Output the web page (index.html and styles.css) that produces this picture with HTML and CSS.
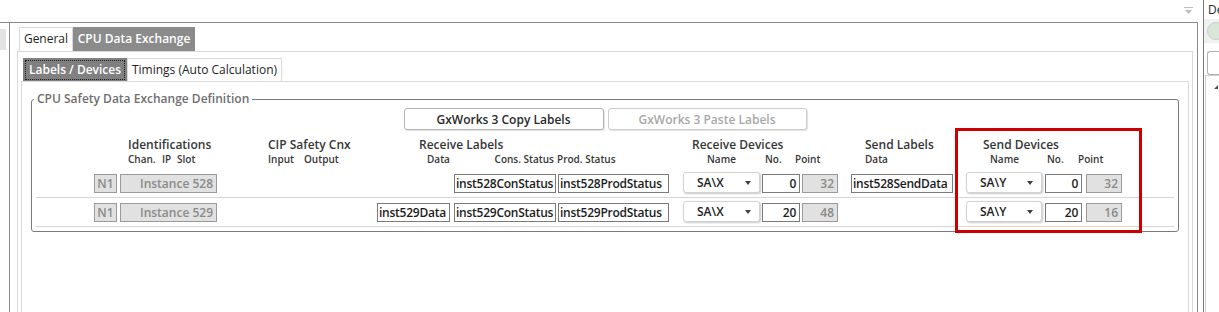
FILE: index.html
```html
<!DOCTYPE html>
<html lang="en">

<head>
    <meta charset="UTF-8">
    <meta name="viewport" content="width=device-width, initial-scale=1.0">
    <title>CPU Data Exchange</title>
    <link rel="stylesheet" href="styles.css">
</head>

<body>
    <div class="main">
        <div class="titlebar">
            <svg class="pin" width="9" height="8" viewBox="0 0 9 8">
                <rect x="0" y="0" width="9" height="1" fill="#bdbdbd" />
                <path d="M1 3 H8 L4.5 7 Z" fill="#bdbdbd" />
            </svg>
        </div>
        <div class="workspace">
            <div class="left-stub">
                <div class="stub-item"></div>
            </div>
            <div class="doc">
                <div class="tabs">
                    <div class="tab tab-general">General</div>
                    <div class="tab tab-cpu active">CPU Data Exchange</div>
                </div>
                <div class="tab-page">
                    <div class="tabs inner">
                        <div class="tab tab-labels active"><span class="focus">Labels / Devices</span></div>
                        <div class="tab tab-timings">Timings (Auto Calculation)</div>
                    </div>
                    <div class="tab-page inner-page">
                        <fieldset class="group">
                            <legend>CPU Safety Data Exchange Definition</legend>
                            <div class="actions">
                                <button class="btn">GxWorks 3 Copy Labels</button>
                                <button class="btn" disabled>GxWorks 3 Paste Labels</button>
                            </div>

                            <div class="head">
                                <div class="hcol h-ident">
                                    <div class="htitle">Identifications</div>
                                    <div class="hsub"><span class="w-chan">Chan.</span><span class="w-ip">IP</span><span>Slot</span></div>
                                </div>
                                <div class="hcol h-cip">
                                    <div class="htitle">CIP Safety Cnx</div>
                                    <div class="hsub"><span class="w-input">Input</span><span>Output</span></div>
                                </div>
                                <div class="hcol h-rlab">
                                    <div class="htitle">Receive Labels</div>
                                    <div class="hsub"><span class="s-data">Data</span><span>Cons. Status</span><span class="s-prod">Prod. Status</span></div>
                                </div>
                                <div class="hcol h-rdev">
                                    <div class="htitle">Receive Devices</div>
                                    <div class="hsub"><span class="w-rname">Name</span><span class="w-rno">No.</span><span>Point</span></div>
                                </div>
                                <div class="hcol h-slab">
                                    <div class="htitle">Send Labels</div>
                                    <div class="hsub"><span>Data</span></div>
                                </div>
                                <div class="hcol h-sdev">
                                    <div class="htitle">Send Devices</div>
                                    <div class="hsub"><span class="w-sname">Name</span><span class="w-sno">No.</span><span>Point</span></div>
                                </div>
                            </div>

                            <div class="row first">
                                <div class="box ro center at-chan">N1</div>
                                <div class="box ro at-inst">Instance 528</div>
                                <div class="box at-cons">inst528ConStatus</div>
                                <div class="box at-prod">inst528ProdStatus</div>
                                <div class="combo at-rname"><span>SA\X</span><i class="caret"></i></div>
                                <div class="box num at-rno">0</div>
                                <div class="box ro at-rpt">32</div>
                                <div class="box at-slab">inst528SendData</div>
                                <div class="combo at-sname"><span>SA\Y</span><i class="caret"></i></div>
                                <div class="box num at-sno">0</div>
                                <div class="box ro at-spt">32</div>
                            </div>
                            <div class="row">
                                <div class="box ro center at-chan">N1</div>
                                <div class="box ro at-inst">Instance 529</div>
                                <div class="box at-data">inst529Data</div>
                                <div class="box at-cons">inst529ConStatus</div>
                                <div class="box at-prod">inst529ProdStatus</div>
                                <div class="combo at-rname"><span>SA\X</span><i class="caret"></i></div>
                                <div class="box num at-rno">20</div>
                                <div class="box ro at-rpt">48</div>
                                <div class="combo at-sname"><span>SA\Y</span><i class="caret"></i></div>
                                <div class="box num at-sno">20</div>
                                <div class="box ro at-spt">16</div>
                            </div>
                        </fieldset>
                    </div>
                </div>
            </div>
        </div>
    </div>

    <div class="side">
        <div class="side-title">De</div>
        <div class="side-toolbar"><span class="side-icon"></span></div>
        <div class="side-search"></div>
        <div class="side-tree"><i class="tree-arrow"></i></div>
    </div>

    <div class="highlight"></div>
</body>

</html>
```

FILE: styles.css
```css
html,
body {
    height: 100%;
}

body {
    margin: 0;
    display: flex;
    overflow: hidden;
    background-color: #ffffff;
    color: #1e1e1e;
    font-family: "Open Sans", "Noto Sans", sans-serif;
    font-size: 12px;
}

.main {
    width: 1198px;
    flex: none;
    display: flex;
    flex-direction: column;
}

.titlebar {
    flex: none;
    height: 22px;
    border-bottom: 1px solid #8a8a8a;
    display: flex;
    justify-content: flex-end;
    align-items: flex-start;
}

.pin {
    margin: 7px 5px 0 0;
}

.workspace {
    flex: 1;
    min-height: 0;
    display: flex;
}

.left-stub {
    width: 9px;
}

.stub-item {
    width: 6px;
    height: 21px;
    margin-top: 6px;
    background-color: #e3e3e3;
}

.doc {
    flex: 1;
    overflow: hidden;
    border-left: 1px solid #8a8a8a;
    border-right: 1px solid #8a8a8a;
    padding: 4px 4px 0 7px;
}

/* Tabs */

.tabs {
    display: flex;
    padding-left: 2px;
}

.tab {
    box-sizing: border-box;
    height: 24px;
    line-height: 22px;
    border: 1px solid #d9d9d9;
    border-bottom: none;
    text-align: center;
    white-space: nowrap;
}

.tab.active {
    background-color: #8b8b8b;
    border-color: #8b8b8b;
    color: #ffffff;
    font-weight: 600;
}

.tab-general {
    width: 54px;
}

.tab-cpu {
    width: 122px;
}

.tab-page {
    height: 300px;
    border: 1px solid #d9d9d9;
    border-bottom: none;
    padding: 0 3px;
}

.tabs.inner {
    margin-top: 6px;
}

.tabs.inner .tab {
    height: 23px;
}

.tab-labels {
    width: 104px;
    padding: 1px;
}

.tab-labels.active {
    background-color: #808080;
    border-color: #808080;
}

.focus {
    display: block;
    height: 100%;
    box-sizing: border-box;
    border: 1px dotted #1a1a1a;
    line-height: 18px;
}

.tab-timings {
    width: 155px;
}

.inner-page {
    padding: 0 9px;
}

/* Group box */

.group {
    margin: 9px 0 0 0;
    padding: 0 0 4px 0;
    border: 1px solid #7a7a7a;
    border-radius: 3px;
    min-inline-size: 0;
}

.group legend {
    margin-left: 2px;
    padding: 0 3px;
    line-height: 16px;
    font-weight: 600;
    color: #6f6f6f;
}

.actions {
    display: flex;
    justify-content: center;
    gap: 4px;
    margin-top: 1px;
}

.btn {
    width: 200px;
    height: 22px;
    padding: 0;
    font-family: inherit;
    font-size: 12px;
    font-weight: 600;
    color: #2a2a2a;
    background-color: #ffffff;
    border: 1px solid #b4b4b4;
    border-radius: 3px;
    box-shadow: 1px 1px 1px rgba(0, 0, 0, 0.12);
}

.btn:disabled {
    width: 199px;
    color: #a8a8a8;
    border-color: #cccccc;
}

/* Column headers */

.head {
    display: flex;
    margin: 7px 4px 0;
    padding-left: 92px;
    color: #363636;
    font-weight: 600;
    white-space: nowrap;
}

.htitle {
    line-height: 16px;
}

.hsub {
    display: flex;
    font-size: 10px;
    line-height: 12px;
}

.h-ident {
    width: 140px;
}

.h-cip {
    width: 151px;
}

.h-rlab {
    width: 273px;
}

.h-rdev {
    width: 173px;
}

.h-slab {
    width: 118px;
}

.w-chan {
    width: 34px;
}

.w-ip {
    width: 15px;
}

.w-input {
    width: 36px;
}

.s-data {
    flex: 1;
    margin-left: 8px;
}

.s-prod {
    width: 135px;
    margin-left: 3px;
}

.w-rname {
    width: 58px;
    margin-left: 15px;
}

.w-rno {
    width: 30px;
}

.w-sname {
    width: 57px;
    margin-left: 7px;
}

.w-sno {
    width: 31px;
}

/* Data rows */

.row {
    display: grid;
    grid-template-columns: [chan] 23px 3px [inst] 97px 160px [data] 73px 4px [cons] 102px 2px [prod] 111px 14px [rname] 77px 2px [rno] 38px 2px [rpt] 36px 13px [slab] 102px 13px [sname] 76px 3px [sno] 37px 4px [spt] 36px;
    grid-auto-rows: 21px;
    align-items: end;
    margin: 0 4px;
    padding: 3px 0 4px 58px;
    border-bottom: 1px solid #d6d6d6;
}

.row.first {
    padding-top: 7px;
}

.box {
    box-sizing: border-box;
    height: 19px;
    line-height: 17px;
    padding: 0 1px;
    border: 1px solid #7a7a7a;
    background-color: #ffffff;
    color: #1c1c1c;
    font-weight: 600;
    letter-spacing: -0.25px;
    white-space: nowrap;
    overflow: hidden;
}

.box.ro {
    background-color: #e1e1e1;
    border-color: #9a9a9a;
    color: #8a8a8a;
    text-align: right;
    padding-right: 3px;
    letter-spacing: 0;
}

.box.center {
    text-align: center;
    padding: 0;
}

.box.num {
    text-align: right;
    padding-right: 3px;
}

.combo {
    box-sizing: border-box;
    height: 21px;
    display: flex;
    align-items: center;
    padding-left: 13px;
    border: 1px solid #d2d2d2;
    border-radius: 3px;
    background-color: #ffffff;
    box-shadow: 1px 1px 2px rgba(0, 0, 0, 0.22);
    font-weight: 600;
    color: #1c1c1c;
}

.caret {
    margin-left: auto;
    margin-right: 8px;
    width: 0;
    height: 0;
    border-left: 3.5px solid transparent;
    border-right: 3.5px solid transparent;
    border-top: 4px solid #404040;
}

.at-chan { grid-column: chan / span 1; }
.at-inst { grid-column: inst / span 1; }
.at-data { grid-column: data / span 1; }
.at-cons { grid-column: cons / span 1; }
.at-prod { grid-column: prod / span 1; }
.at-rname { grid-column: rname / span 1; }
.at-rno { grid-column: rno / span 1; }
.at-rpt { grid-column: rpt / span 1; }
.at-slab { grid-column: slab / span 1; }
.at-sname { grid-column: sname / span 1; }
.at-sno { grid-column: sno / span 1; }
.at-spt { grid-column: spt / span 1; }

/* Annotation */

.highlight {
    position: absolute;
    left: 955px;
    top: 128px;
    width: 187px;
    height: 105px;
    box-sizing: border-box;
    border: 3px solid #cc0000;
}

/* Side panel */

.side {
    flex: 1;
    margin-left: 5px;
    border-left: 1px solid #7a7a7a;
    overflow: hidden;
}

.side-title {
    height: 19px;
    line-height: 19px;
    padding-left: 4px;
    color: #2a2a2a;
}

.side-toolbar {
    height: 24px;
    background-color: #f0f0f0;
    display: flex;
    align-items: center;
    padding-left: 3px;
}

.side-icon {
    width: 16px;
    height: 16px;
    flex: none;
    border-radius: 50%;
    background-color: #d9e6d9;
    border: 1px solid #c2d4c2;
}

.side-search {
    height: 22px;
    margin: 8px 0 0 3px;
    border: 1px solid #b0b0b0;
    border-right: none;
    border-radius: 3px 0 0 3px;
}

.side-tree {
    height: 240px;
    margin-left: 1px;
    border-left: 1px solid #d0d0d0;
    border-top: 1px solid #d0d0d0;
    padding: 9px 0 0 8px;
}

.tree-arrow {
    display: block;
    width: 0;
    height: 0;
    border-right: 4px solid #505050;
    border-top: 4px solid transparent;
}
```
